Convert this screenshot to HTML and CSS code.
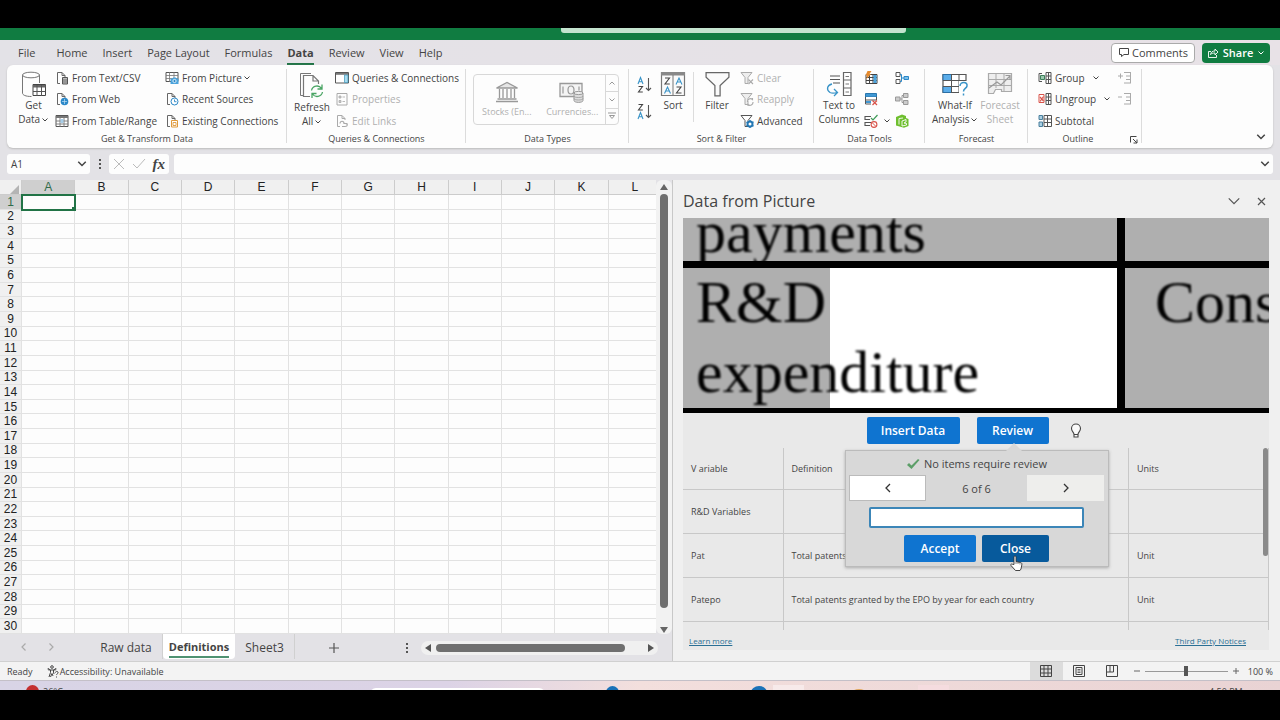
FILE: index.html
```html
<!DOCTYPE html>
<html lang="en">
<head>
<meta charset="utf-8">
<title>Data from Picture</title>
<link rel="stylesheet" href="styles.css">
<script src="grid.js" defer></script>
</head>
<body>
<svg class="sprite" aria-hidden="true">
  <symbol id="chev" viewBox="0 0 8 8"><path d="M1.500 2.500l2.500 2.500 2.500-2.500" fill="none" stroke="currentColor" stroke-width="1"/></symbol>
  <symbol id="page" viewBox="0 0 14 14"><path d="M5 12.500H2.500V1.500h4.500l3 3V6M7 1.500v3h3" fill="none" stroke="#666"/></symbol>
  <symbol id="funnel" viewBox="0 0 24 26"><path d="M1 1.500h22V6l-8.500 8v10h-5V14L1 6z" fill="#fafafa" stroke="#666" stroke-width="1.200"/></symbol>
</svg>

<div class="app">
  <header class="titlebar"><div class="search-edge"></div></header>

  <nav class="tabs">
    <button class="tab tab-file">File</button>
    <button class="tab">Home</button>
    <button class="tab">Insert</button>
    <button class="tab">Page Layout</button>
    <button class="tab">Formulas</button>
    <button class="tab active">Data</button>
    <button class="tab">Review</button>
    <button class="tab">View</button>
    <button class="tab">Help</button>
    <span class="grow"></span>
    <button class="comments"><svg width="12" height="11" viewBox="0 0 12 11"><path d="M1.500 1.500h9v6H6L3.500 9.500v-2h-2z" fill="none" stroke="#444"/></svg>Comments</button>
    <button class="share"><svg width="12" height="12" viewBox="0 0 12 12"><path d="M4 4.500H1.500v6h8V8M3.500 7.500c.5-2.500 2-3.500 4.500-3.500V2l3 3-3 3V6C6 6 4.500 6.500 3.500 7.500z" fill="none" stroke="#fff" stroke-width=".9"/></svg>Share<svg class="chev" viewBox="0 0 8 8"><use href="#chev"/></svg></button>
  </nav>

  <section class="ribbon">
    <div class="group g-get">
      <div class="body">
        <button class="big w-get">
          <svg width="26" height="27" viewBox="0 0 26 27"><path d="M1.500 4v18c0 2 3 3.500 9 3.500M18.500 12V4" fill="none" stroke="#777"/><ellipse cx="10" cy="4" rx="8.500" ry="2.800" fill="#fff" stroke="#777"/><path d="M12 13.500h12.500v11H12z" fill="#fff" stroke="#444"/><path d="M12 14h12.500v2.500H12z" fill="#666"/><path d="M12 20.500h12.500M16 14v11M20.500 14v11" stroke="#555"/></svg>
          <span>Get<br>Data <svg class="chev" viewBox="0 0 8 8"><use href="#chev"/></svg></span>
        </button>
        <div class="list l-wide">
          <button><svg class="ico" viewBox="0 0 14 14"><use href="#page"/><path d="M7.500 6.500h5v6.500h-5z" fill="#bbb" stroke="#555"/><path d="M8 9h4M8 11h4" stroke="#555" stroke-width=".7"/></svg>From Text/CSV</button>
          <button><svg class="ico" viewBox="0 0 14 14"><use href="#page"/><circle cx="9.500" cy="9.500" r="3.800" fill="#2b88c8"/><path d="M9.500 7v5M7 9.500h5" stroke="#bfe0f5" stroke-width=".7"/></svg>From Web</button>
          <button><svg class="ico" viewBox="0 0 14 14"><path d="M1 1.500h12v11H1z" fill="#fff" stroke="#555"/><path d="M1 2h12v2H1z" fill="#777"/><path d="M1 7h12M1 10h12M5 2v11M9 2v11" stroke="#777" stroke-width=".9"/><path d="M5.500 5h3v4h-3z" fill="#a7cde8"/></svg>From Table/Range</button>
        </div>
        <div class="list">
          <button><svg class="ico" viewBox="0 0 14 14"><path d="M1 1.500h12v9H1z" fill="#fff" stroke="#555"/><path d="M1 4.500h12M1 7.500h12M4.500 1v10M9 1v10" stroke="#777" stroke-width=".8"/><path d="M5.500 7.500h2l.7-1h2.600l.7 1h2v5.500h-8z" fill="#4ba3dc"/><circle cx="9.500" cy="10" r="1.600" fill="#2b88c8" stroke="#fff" stroke-width=".8"/></svg>From Picture<svg class="chev snug" viewBox="0 0 8 8"><use href="#chev"/></svg></button>
          <button><svg class="ico" viewBox="0 0 14 14"><use href="#page"/><circle cx="9.500" cy="9.500" r="3.500" fill="#fff" stroke="#2b88c8"/><path d="M9.500 7.500v2.200h2" fill="none" stroke="#2b88c8" stroke-width=".9"/></svg>Recent Sources</button>
          <button><svg class="ico" viewBox="0 0 14 14"><use href="#page"/><path d="M6.500 6.500h6v6.500h-6z" fill="#fff" stroke="#e09a3c"/><path d="M8 8.500h3v3H8z" fill="none" stroke="#e09a3c" stroke-width=".9"/></svg>Existing Connections</button>
        </div>
      </div>
      <div class="label">Get &amp; Transform Data</div>
    </div>

    <div class="group g-query">
      <div class="body">
        <button class="big w-refresh">
          <svg width="26" height="29" viewBox="0 0 26 29"><path d="M4 24.500H1.500v-22H12" fill="none" stroke="#777"/><path d="M11 25.500H4.500V4.500H14l5.500 5.500v3M14 4.500V10h5.500" fill="none" stroke="#777" stroke-width="1.200"/><path d="M12.500 19.500a5.500 5.500 0 0 1 10-2M23.500 21a5.500 5.500 0 0 1-10 2M23 13.500v4.500h-4.500M13 27v-4.500h4.500" fill="none" stroke="#4aa564" stroke-width="1.300"/></svg>
          <span>Refresh<br>All <svg class="chev" viewBox="0 0 8 8"><use href="#chev"/></svg></span>
        </button>
        <div class="list">
          <button><svg class="ico" viewBox="0 0 14 14"><path d="M.5 1.500h13v10.500H.5z" fill="#fff" stroke="#555"/><path d="M1 2h12v1.800H1z" fill="#777"/><path d="M9.500 4h3.500v7.500H9.500z" fill="#a9dcf0" stroke="#3b93b8" stroke-width=".7"/></svg>Queries &amp; Connections</button>
          <button class="off"><svg class="ico" viewBox="0 0 14 14"><path d="M2 1.500h10v11.500H2z" fill="none" stroke="#aaa"/><path d="M4 4h2v2H4zM4 8.500h2v2H4zM7.500 5H10M7.500 9.500H10" fill="#ccc" stroke="#aaa" stroke-width=".8"/></svg>Properties</button>
          <button class="off"><svg class="ico" viewBox="0 0 14 14"><path d="M5 12.500H2.500V1.500h4.500l3 3V6M7 1.500v3h3" fill="none" stroke="#aaa"/><path d="M5 9.500c0-3 4-3 4 0h3.500M7 12.500h3c3 0 3-3 .5-3" fill="none" stroke="#aaa" stroke-width="1.200"/></svg>Edit Links</button>
        </div>
      </div>
      <div class="label">Queries &amp; Connections</div>
    </div>

    <div class="group g-types">
      <div class="body">
        <div class="gallery">
          <button class="off type"><svg width="24" height="22" viewBox="0 0 24 22"><path d="M1.500 7L12 1.500 22.500 7zM1 20.500h22M2.500 18h19M4.500 8v9M8 8v9M12 8v9M16 8v9M19.500 8v9" fill="#e6e6e6" stroke="#999" stroke-width="1.300"/></svg>Stocks (En...</button>
          <button class="off type"><svg width="26" height="22" viewBox="0 0 26 22"><path d="M1 2.500h22v13H1z" fill="#f4f4f4" stroke="#999" stroke-width="1.300"/><path d="M4 5.500v7M20 5.500v4M12 5c-4 0-4 8 0 8 4 0 4-8 0-8z" fill="none" stroke="#999" stroke-width="1.200"/><path d="M15 12v7.500c0 2.500 9 2.500 9 0V12z" fill="#ddd" stroke="#999"/><ellipse cx="19.500" cy="12" rx="4.500" ry="1.600" fill="#eee" stroke="#999"/><path d="M15 15c0 2 9 2 9 0M15 17.500c0 2 9 2 9 0" fill="none" stroke="#999" stroke-width=".8"/></svg>Currencies...</button>
          <div class="spin">
            <button aria-label="Previous row"><svg class="chev flip" viewBox="0 0 8 8"><use href="#chev"/></svg></button>
            <button aria-label="Next row"><svg class="chev" viewBox="0 0 8 8"><use href="#chev"/></svg></button>
            <button aria-label="More data types"><svg class="chev" viewBox="0 0 8 8"><path d="M0 1h8M1.500 3.500h5L4 6.500z" fill="none" stroke="currentColor"/></svg></button>
          </div>
        </div>
      </div>
      <div class="label">Data Types</div>
    </div>

    <div class="group g-sort">
      <div class="body">
        <div class="az">
          <button aria-label="Sort A to Z"><svg width="16" height="18" viewBox="0 0 16 18"><path d="M1 8l2.500-6.500L6 8M1.800 5.800h3.400" fill="none" stroke="#3a94c8" stroke-width="1.100"/><path d="M1.500 10.500h4l-4 5.500h4.300" fill="none" stroke="#444" stroke-width="1.100"/><path d="M11.500 2v12.500M9 12l2.500 2.500L14 12" fill="none" stroke="#555" stroke-width="1.100"/></svg></button>
          <button aria-label="Sort Z to A"><svg width="16" height="18" viewBox="0 0 16 18"><path d="M1.500 1.500h4l-4 5.500h4.300" fill="none" stroke="#444" stroke-width="1.100"/><path d="M1 16l2.500-6.500L6 16M1.800 13.800h3.400" fill="none" stroke="#3a94c8" stroke-width="1.100"/><path d="M11.500 2v12.500M9 12l2.500 2.500L14 12" fill="none" stroke="#555" stroke-width="1.100"/></svg></button>
        </div>
        <button class="big w-sort">
          <svg width="26" height="27" viewBox="0 0 26 27"><path d="M1.500 1.500h23v23h-23z" fill="#fafafa" stroke="#777" stroke-width="1.200"/><path d="M1 1h24v3.500H1z" fill="#888"/><path d="M13 4v20" stroke="#777"/><path d="M5 7h4.500L5 13h4.800M16.500 16H21l-4.500 6h5" fill="none" stroke="#444" stroke-width="1.100"/><path d="M4.500 22.500L7.500 16l3 6.500M5.500 20h4M16 13.500L19 7l3 6.500M17 11h4" fill="none" stroke="#3a94c8" stroke-width="1.100"/></svg>
          <span>Sort</span>
        </button>
        <div class="rule"></div>
        <button class="big w-filter">
          <svg width="25" height="27" viewBox="0 0 24 26"><use href="#funnel"/></svg>
          <span>Filter</span>
        </button>
        <div class="list">
          <button class="off"><svg class="ico" viewBox="0 0 14 14"><path d="M1 1.500h11l-4 5v6H5v-6z" fill="#eee" stroke="#aaa"/><path d="M8.500 8.500l4.500 4.500M13 8.500L8.500 13" stroke="#aaa" stroke-width="1.100"/></svg>Clear</button>
          <button class="off"><svg class="ico" viewBox="0 0 14 14"><path d="M1 1.500h11l-4 5v6H5v-6z" fill="#eee" stroke="#aaa"/><path d="M7.500 10a3 3 0 0 1 5-2.500V6M13 10a3 3 0 0 1-5 2.500V14" fill="#fff" stroke="#aaa" stroke-width="1.100"/></svg>Reapply</button>
          <button><svg class="ico" viewBox="0 0 14 14"><path d="M1 1.500h11l-4 5v6H5v-6z" fill="#fff" stroke="#555"/><circle cx="10" cy="10" r="2.500" fill="#fff" stroke="#2478b4" stroke-width="2"/><path d="M10 6v1.500M10 12.500V14M6.500 8l1 .8M12.500 11.500l1 .7M6.500 12l1-.8M12.500 8.500l1-.7" stroke="#2478b4" stroke-width="1.400"/></svg>Advanced</button>
        </div>
      </div>
      <div class="label">Sort &amp; Filter</div>
    </div>

    <div class="group g-tools">
      <div class="body">
        <button class="big w-ttc">
          <svg width="28" height="27" viewBox="0 0 28 27"><path d="M5 5h10M5 8.500h10M8 12h7" stroke="#555" stroke-width="1.200"/><path d="M7 13c-5 1-6 6-2 8.500 2 1 4 1 7 0M9 18l3.500 3.500L9 25" fill="none" stroke="#3a94c8" stroke-width="1.300"/><path d="M18.500 1.500h7.500v23h-7.500zM18.500 9h7.500M18.500 17h7.500" fill="#fff" stroke="#666" stroke-width="1.200"/><path d="M20.500 5.500h3.500M20.500 13h3.500M20.500 21h3.500" stroke="#777"/></svg>
          <span>Text to<br>Columns</span>
        </button>
        <div class="list icons">
          <button aria-label="Flash Fill"><svg class="ico" viewBox="0 0 14 14"><path d="M2 3.500h11v9H2z" fill="#fff" stroke="#444"/><path d="M2 6.500h11M2 9.500h11M5.500 3v10M9 3v10" stroke="#444"/><path d="M9.500 4h3v8h-3z" fill="#4ba3dc"/><path d="M3.500 0h4L5.500 3H7L2 8.500l1.200-4H1.500z" fill="#e58a2e"/></svg></button>
          <button aria-label="Remove Duplicates"><svg class="ico" viewBox="0 0 14 14"><path d="M1.500 1.500h11V5h-11z" fill="#3f97d3" stroke="#2a77ae"/><path d="M1.500 5v3h11V5M1.500 8v4H7" fill="#fff" stroke="#555"/><path d="M2 9h5v2H2z" fill="#3f97d3"/><path d="M8.500 8.500L13 13M13 8.500L8.500 13" stroke="#d9534a" stroke-width="1.200"/></svg></button>
          <button aria-label="Data Validation"><svg class="ico" viewBox="0 0 14 14"><path d="M7 2.500H1v3h5M7 8.500H1v3h5" fill="none" stroke="#555" stroke-width="1.100"/><path d="M7 4l2 2 4.500-5" fill="none" stroke="#3f9b58" stroke-width="1.200"/><circle cx="10" cy="10.500" r="2.900" fill="#fff" stroke="#d9534a" stroke-width="1.100"/><path d="M8 8.500l4 4" stroke="#d9534a"/></svg><svg class="chev" viewBox="0 0 8 8"><use href="#chev"/></svg></button>
        </div>
        <div class="list icons">
          <button aria-label="Consolidate"><svg class="ico" viewBox="0 0 14 14"><path d="M1 1.500h4v4H1zM1 8.500h4v4H1z" fill="#fff" stroke="#555"/><path d="M5 3.500h1.500v7H5M6.500 7H9" fill="none" stroke="#2b88c8"/><path d="M9 5.500h4.500v3H9z" fill="#7fc0ea" stroke="#2b88c8"/></svg></button>
          <button class="off" aria-label="Relationships"><svg class="ico" viewBox="0 0 14 14"><path d="M.5 5h4.500v4H.5zM8.500 1.500H13v4H8.500zM8.500 8.500H13v4H8.500z" fill="#ccc" stroke="#999"/><path d="M5 7h2M8.500 3.500H7v7h1.500" fill="none" stroke="#999"/></svg></button>
          <button aria-label="Manage Data Model"><svg class="ico" viewBox="0 0 14 14"><path d="M1 3l6-2.500L11 2v2l2.500 1v7L9 13.800 1 11.500z" fill="#6fbf2f"/><path d="M4 10.500V4.500L8 4M7 12V7l4-1.500V8L9 9l2.500.5V11z" fill="none" stroke="#fff" stroke-width=".9"/></svg></button>
        </div>
      </div>
      <div class="label">Data Tools</div>
    </div>

    <div class="group g-fore">
      <div class="body">
        <button class="big w-whatif">
          <svg width="28" height="27" viewBox="0 0 28 27"><path d="M2 3.500h23v18H2z" fill="#fff" stroke="#555" stroke-width="1.200"/><path d="M2 3.500h8.500v6H2zM2 15.500h8.500v6H2z" fill="#5badea" stroke="#2a6fa5"/><path d="M2 9.500h23M2 15.500h23M10.500 3v19M18 3v19" stroke="#555"/><path d="M18 10h8v14h-8z" fill="#fff"/><path d="M19 15c0-5 8-4.500 7 0-.5 2.500-3.500 2.500-3.500 5.500M22.500 22.500v2" fill="none" stroke="#3a94c8" stroke-width="1.500"/></svg>
          <span>What-If<br>Analysis <svg class="chev" viewBox="0 0 8 8"><use href="#chev"/></svg></span>
        </button>
        <button class="big w-fsheet off">
          <svg width="26" height="27" viewBox="0 0 26 27"><path d="M1.500 2.500h23v18h-10v-2h-6l-2 4h-5z" fill="#eee" stroke="#aaa" stroke-width="1.200"/><path d="M2 8.500h22M2 14.500h22M9 3v14M17 3v17" stroke="#aaa"/><path d="M2 17l8-6 4 3 9-9M18.500 4.500H23V9" fill="none" stroke="#999" stroke-width="1.200"/></svg>
          <span>Forecast<br>Sheet</span>
        </button>
      </div>
      <div class="label">Forecast</div>
    </div>

    <div class="group g-out">
      <div class="body">
        <div class="list">
          <button><svg class="ico" viewBox="0 0 14 14"><path d="M4 2.500H1v8h3" fill="none" stroke="#555"/><path d="M2.500 4.500h4v4h-4z" fill="#9ccbb0" stroke="#3d7f5b"/><path d="M8 1.500h5v11H8zM8 5h5M8 8.500h5M10.500 1.500v11" fill="#fff" stroke="#555"/></svg>Group<svg class="chev far" viewBox="0 0 8 8"><use href="#chev"/></svg></button>
          <button><svg class="ico" viewBox="0 0 14 14"><path d="M1 2.500h5v8H1z" fill="#fff" stroke="#d9534a"/><path d="M2 9.500l3.500-5M2 5l3.500 4" stroke="#d9534a" stroke-width="1.200"/><path d="M8 1.500h5v11H8zM8 5h5M8 8.500h5M10.500 1.500v11" fill="#fff" stroke="#555"/></svg>Ungroup<svg class="chev far" viewBox="0 0 8 8"><use href="#chev"/></svg></button>
          <button><svg class="ico" viewBox="0 0 14 14"><path d="M1 1.500h3.500v4H1zM1 8h3.500v4.500H1z" fill="#a9cfe2" stroke="#4a7f9c"/><path d="M6 1.500h7.500v11H6zM6 5h7.500M6 8.500h7.500M9.500 1.500v11" fill="#fff" stroke="#555"/></svg>Subtotal</button>
        </div>
        <div class="list icons end">
          <button class="off" aria-label="Show Detail"><svg class="ico" viewBox="0 0 14 14"><path d="M0 5h5M2.500 2.500v5M6 1.500h7M8 5h5M8 8.500h5M6 12h7M12.500 1.500V12" fill="none" stroke="#aaa"/></svg></button>
          <button class="off" aria-label="Hide Detail"><svg class="ico" viewBox="0 0 14 14"><path d="M0 5h4M6 1.500h7M8 5h5M8 8.500h5M6 12h7M12.500 1.500V12" fill="none" stroke="#aaa"/></svg></button>
        </div>
      </div>
      <div class="label out">Outline</div>
      <button class="launcher" aria-label="Outline settings"><svg width="8" height="8" viewBox="0 0 8 8"><path d="M.5 6.500v-6h6M3 3l4 4M7 3.500V7H3.500" fill="none" stroke="#444"/></svg></button>
    </div>
    <button class="collapse" aria-label="Collapse ribbon"><svg width="12" height="12" viewBox="0 0 8 8"><use href="#chev"/></svg></button>
  </section>

  <div class="formula">
    <button class="namebox">A1<svg width="12" height="12" viewBox="0 0 8 8"><use href="#chev"/></svg></button>
    <svg width="4" height="12" viewBox="0 0 4 12"><path d="M1 1h2v2H1zM1 5h2v2H1zM1 9h2v2H1z" fill="#555"/></svg>
    <div class="fx">
      <svg width="12" height="12" viewBox="0 0 12 12"><path d="M1 1l10 10M11 1L1 11" stroke="#bbb" fill="none"/></svg>
      <svg width="14" height="12" viewBox="0 0 14 12"><path d="M1 6l4 4 8-9" stroke="#bbb" fill="none"/></svg>
      <span class="fn">fx</span>
    </div>
    <div class="bar"><input type="text" aria-label="Formula"><svg width="12" height="12" viewBox="0 0 8 8"><use href="#chev"/></svg></div>
  </div>

  <main class="work">
    <section class="sheet">
      <div class="gridarea">
        <div class="clip"><table class="cells" id="cells"></table></div>
        <div class="vbar">
          <svg width="10" height="8" viewBox="0 0 10 8"><path d="M5 1l4 6H1z" fill="#666"/></svg>
          <div class="vthumb"></div>
          <svg width="10" height="8" viewBox="0 0 10 8"><path d="M1 1h8L5 7z" fill="#666"/></svg>
        </div>
      </div>
      <div class="sheettabs">
        <div class="arrows">
          <button aria-label="Previous sheet"><svg width="8" height="10" viewBox="0 0 8 10"><path d="M5.500 1.500L2 5l3.500 3.500" fill="none" stroke="#aaa" stroke-width="1.200"/></svg></button>
          <button aria-label="Next sheet"><svg width="8" height="10" viewBox="0 0 8 10"><path d="M2.500 1.500L6 5 2.500 8.500" fill="none" stroke="#aaa" stroke-width="1.200"/></svg></button>
        </div>
        <button class="st first">Raw data</button>
        <button class="st on"><span>Definitions</span></button>
        <button class="st third">Sheet3</button>
        <button class="add" aria-label="New sheet"><svg width="10" height="10" viewBox="0 0 10 10"><path d="M5 0v10M0 5h10" stroke="#555" stroke-width="1.200"/></svg></button>
        <span class="grow"></span>
        <svg width="4" height="12" viewBox="0 0 4 12"><path d="M1 1h2v2H1zM1 5h2v2H1zM1 9h2v2H1z" fill="#555"/></svg>
        <div class="hbar">
          <svg width="7" height="8" viewBox="0 0 7 8"><path d="M6 0v8L0 4z" fill="#555"/></svg>
          <div class="hthumb"></div>
          <svg width="7" height="8" viewBox="0 0 7 8"><path d="M1 0v8l6-4z" fill="#555"/></svg>
        </div>
      </div>
    </section>

    <aside class="pane">
      <div class="panehead">
        <h1>Data from Picture</h1>
        <button aria-label="Pane options"><svg width="14" height="14" viewBox="0 0 8 8"><path d="M1 2.500l3 3 3-3" fill="none" stroke="#555" stroke-width=".7"/></svg></button>
        <button aria-label="Close pane"><svg width="9" height="9" viewBox="0 0 9 9"><path d="M1 1l7 7M8 1L1 8" stroke="#555" stroke-width="1.200"/></svg></button>
      </div>
      <div class="panebody">
        <div class="picture">
          <div class="pc up"><p>payments</p></div>
          <div class="pc"></div>
          <div class="pc lit"><p>R&amp;D<br>expenditure</p></div>
          <div class="pc cons"><p>Cons</p></div>
        </div>
        <div class="actions">
          <button class="primary wide">Insert Data</button>
          <button class="primary">Review</button>
          <button class="bulb" aria-label="Tips"><svg width="12" height="16" viewBox="0 0 12 16"><path d="M4 11.500c0-2.500-2.500-3-2.500-6a4.500 4.500 0 0 1 9 0c0 3-2.500 3.500-2.500 6zM4 11.500V14h4v-2.500" fill="#fafafa" stroke="#444" stroke-width="1.100"/></svg></button>
          <div class="pop">
            <svg class="caret" width="16" height="8" viewBox="0 0 16 8"><path d="M0 8l8-8 8 8z" fill="#d8d8d8"/></svg>
            <div class="msg"><svg width="14" height="12" viewBox="0 0 14 12"><path d="M1 7l2-2 2.500 2.500L12 1l1.500 1L5.500 11z" fill="#5c9e68"/></svg>No items require review</div>
            <div class="nav">
              <button class="prev" aria-label="Previous item"><svg width="8" height="10" viewBox="0 0 8 10"><path d="M6 1L2 5l4 4" fill="none" stroke="#333" stroke-width="1.300"/></svg></button>
              <span>6 of 6</span>
              <button class="next" aria-label="Next item"><svg width="8" height="10" viewBox="0 0 8 10"><path d="M2 1l4 4-4 4" fill="none" stroke="#333" stroke-width="1.300"/></svg></button>
            </div>
            <input class="edit" type="text" aria-label="Cell value">
            <div class="pair">
              <button class="primary accept">Accept</button>
              <button class="primary close">Close<svg class="cursor" width="13" height="16" viewBox="0 0 13 16"><path d="M4 9.500V2c0-1.500 2-1.500 2 0v4.500l4.500 1c1.300.3 1.500 1.200 1.300 2.500L11 14l-1 1.500H5.500L1 10.500c-.8-1 .5-2 1.500-1.200z" fill="#fff" stroke="#333" stroke-width=".9"/><path d="M6 6.500V9M8 7v2M10 7.500V9.500" stroke="#333" stroke-width=".6"/></svg></button>
            </div>
          </div>
        </div>
        <div class="tablewrap">
          <table class="data">
            <tr><td class="c1">V ariable</td><td>Definition</td><td class="c3">Units</td></tr>
            <tr><td>R&amp;D Variables</td><td></td><td></td></tr>
            <tr><td>Pat</td><td>Total patents</td><td>Unit</td></tr>
            <tr><td>Patepo</td><td>Total patents granted by the EPO by year for each country</td><td>Unit</td></tr>
            <tr><td></td><td></td><td></td></tr>
          </table>
          <div class="tthumb"></div>
        </div>
        <div class="links"><a href="#">Learn more</a><a href="#">Third Party Notices</a></div>
      </div>
    </aside>
  </main>

  <footer class="status">
    <span>Ready</span>
    <svg class="acc" width="12" height="13" viewBox="0 0 12 13"><circle cx="5" cy="2" r="1.300" fill="none" stroke="#444"/><path d="M1 3.500l2.500 1.500v2.500L2 12M9 3.500L6.500 5v2L7 9M1 3.500C.5 5 2 5 3.500 5h3C8 5 9.500 5 9 3.500M3.500 12L5 8.500 6 11" fill="none" stroke="#444"/><path d="M8.500 7.500c0-1.500 3-1.500 2.500.5-.3 1-1.500 1-1.500 2M9.500 11.500v1" fill="none" stroke="#444"/></svg>
    <span>Accessibility: Unavailable</span>
    <span class="grow"></span>
    <button class="view sel" aria-label="Normal view"><svg width="12" height="12" viewBox="0 0 12 12"><path d="M.5.5h11v11H.5zM.5 4h11M.5 8h11M4 .5v11M8 .5v11" fill="none" stroke="#444"/></svg></button>
    <button class="view" aria-label="Page layout view"><svg width="12" height="12" viewBox="0 0 12 12"><path d="M.5.500h11v11H.5zM3 2.500h6v7H3z" fill="none" stroke="#444"/><path d="M4.500 4.500h3M4.500 6h3M4.500 7.500h3" stroke="#444" stroke-width=".8"/></svg></button>
    <button class="view" aria-label="Page break view"><svg width="12" height="12" viewBox="0 0 12 12"><path d="M.5.500h11v11H.5zM.5 7h7V.5M4 .5V7" fill="none" stroke="#444"/></svg></button>
    <svg width="8" height="8" viewBox="0 0 8 8"><path d="M1 4h6" stroke="#666"/></svg>
    <input class="zoom" type="range" min="0" max="100" value="50" aria-label="Zoom">
    <svg width="8" height="8" viewBox="0 0 8 8"><path d="M1 4h6M4 1v6" stroke="#666"/></svg>
    <span class="pct">100 %</span>
  </footer>
  <div class="taskbar">
    <span class="alert"></span><span class="temp">26°C</span>
    <span class="tsearch"></span>
    <span class="dot d1"></span><span class="dot d2"></span><span class="tile"></span>
    <span class="dot gold"></span><span class="tile t2"></span>
    <span class="clock">4:50 PM</span>
  </div>
</div>
</body>
</html>
```

FILE: grid.js
```js
const table = document.getElementById('cells');
const letters = 'ABCDEFGHIJKL'.split('');
const corner = '<th class="corner"><svg width="9" height="9" viewBox="0 0 9 9"><path d="M9 0v9H0z" fill="#b4b4b4"/></svg></th>';
const head = '<thead><tr>' + corner + letters.map((c, i) => `<th class="${i ? '' : 'hot'}">${c}</th>`).join('') + '</tr></thead>';
let rows = '';
for (let r = 1; r <= 30; r++) {
  rows += `<tr><th class="${r === 1 ? 'hot' : ''}">${r}</th>` +
    letters.map((c, i) => r === 1 && i === 0 ? '<td class="picked"><i></i></td>' : '<td></td>').join('') + '</tr>';
}
table.innerHTML = head + '<tbody>' + rows + '</tbody>';
```

FILE: styles.css
```css
* { box-sizing: border-box; }
body {
  margin: 0; height: 100vh; padding: 28px 0 30px; background: #000; overflow: hidden;
  font-family: "Open Sans", "Noto Sans", sans-serif; font-size: 10px; color: #444;
}
button { font: inherit; color: inherit; background: none; border: 0; padding: 0; margin: 0; white-space: nowrap; }
svg { flex: none; }
.sprite { position: absolute; width: 0; height: 0; }
.grow { flex: 1; }
.chev { width: 8px; height: 8px; }
.flip { transform: rotate(180deg); }
.app { height: 100%; display: flex; flex-direction: column; background: #e3e2e6; overflow: hidden; }

.titlebar { height: 12px; flex: none; background: #107c41; display: flex; justify-content: center; padding-left: 187px; }
.search-edge { width: 345px; height: 5px; background: #c4e4cf; border-radius: 0 0 3px 3px; }

.tabs { height: 25px; flex: none; display: flex; align-items: center; gap: 15px; padding: 0 10px 0 18px; font-size: 11px; background: linear-gradient(90deg, #e3e2e7, #e8e2e7); }
.tab { height: 22px; margin-top: 3px; line-height: 20px; border-bottom: 2px solid transparent; }
.tab-file { margin-right: 6px; }
.tab.active { font-weight: 700; border-color: #217346; }
.comments, .share { height: 20px; display: flex; align-items: center; justify-content: center; gap: 2px; border-radius: 4px; font-size: 11px; }
.comments { background: #fff; border: 1px solid #aaa; width: 84px; margin-right: -8px; }
.share { background: #107c41; color: #fff; font-weight: 600; width: 68px; gap: 4px; }

.ribbon { height: 83px; flex: none; margin: 0 7px; background: #fdfdfd; border-radius: 6px; display: flex; padding: 2px 0 0; box-shadow: 0 1px 2px #bbb; position: relative; }
.group { display: flex; flex-direction: column; position: relative; flex: none; }
.group::after { content: ""; position: absolute; right: 0; top: 2px; bottom: 5px; width: 1px; background: #dcdcdc; }
.g-get { width: 280px; } .g-query { width: 179px; } .g-types { width: 163px; } .g-sort { width: 185px; }
.g-tools { width: 111px; } .g-fore { width: 103px; } .g-out { width: 114px; }
.body { flex: 1; display: flex; }
.label { height: 16px; line-height: 14px; text-align: center; font-size: 9px; }
.label.out { padding-right: 14px; }
.big { display: flex; flex-direction: column; align-items: center; padding-top: 4px; line-height: 14px; }
.big .chev { vertical-align: middle; margin-left: -2px; }
.w-get { width: 48px; padding-left: 5px; } .w-refresh { width: 48px; padding-left: 2px; } .w-sort { width: 40px; } .w-filter { width: 46px; }
.w-ttc { width: 56px; } .w-whatif { width: 54px; padding-left: 6px; } .w-fsheet { width: 42px; }
.list { display: grid; grid-template-rows: 21px 22px 21px; justify-items: start; height: 64px; }
.l-wide { width: 110px; }
.list button { display: flex; align-items: center; gap: 3px; }
.list .snug { margin-left: -2px; }
.ico { width: 14px; height: 14px; }
.icons { width: 34px; }
.icons .chev { margin-left: 2px; }
.g-out .list { padding-left: 10px; }
.g-out .list:first-child { width: 90px; }
.g-out .list.end { padding-left: 0; width: 16px; }
.list .far { margin-left: 4px; }
.off { color: #b0b0b0; }
.rule { width: 1px; margin: 5px 0 10px; background: #dcdcdc; }
.az { display: flex; flex-direction: column; gap: 9px; padding: 9px 0 0 8px; width: 24px; }
.az button { height: 18px; }
.gallery { display: flex; flex: 1; margin: 7px 10px 7px 7px; border: 1px solid #d8d8d8; border-radius: 4px; }
.type { display: flex; flex-direction: column; align-items: center; justify-content: center; gap: 2px; flex: 1; line-height: 14px; font-size: 9px; }
.spin { width: 13px; display: grid; grid-template-rows: repeat(3, 1fr); border-left: 1px solid #d8d8d8; color: #999; }
.spin button { line-height: 0; }
.spin button + button { border-top: 1px solid #d8d8d8; }
.launcher { position: absolute; right: 2px; bottom: 2px; line-height: 0; padding: 2px; }
.collapse { margin: auto 6px 5px auto; line-height: 0; }

.formula { height: 32px; flex: none; display: flex; align-items: center; padding: 0 7px; gap: 8px; }
.namebox, .fx, .bar { height: 20px; background: #fdfdfd; border-radius: 3px; display: flex; align-items: center; }
.namebox { width: 83px; justify-content: space-between; padding: 0 2px 0 4px; }
.fx { width: 60px; justify-content: space-between; padding: 0 4px; margin: 0 -3px 0 -1px; }
.fn { font: italic 700 15px/16px "Liberation Serif", serif; }
.bar { flex: 1; padding: 0 2px; }
.bar input { flex: 1; border: 0; background: none; outline: 0; height: 18px; }

.work { flex: 1; min-height: 0; display: flex; border-bottom: 1px solid #d0d0d0; }
.sheet { width: 673px; flex: none; display: flex; flex-direction: column; border-right: 1px solid #c8c8c8; }
.gridarea { flex: 1; min-height: 0; display: flex; }
.clip { flex: 1; overflow: hidden; }
.cells { width: 662px; height: 100%; table-layout: fixed; border-collapse: separate; border-spacing: 0; background: #fdfdfd; font: 12px/12px "Liberation Sans", Arial, sans-serif; }
.cells th, .cells td { padding: 0; border-right: 1px solid #e2e2e2; border-bottom: 1px solid #e2e2e2; }
.cells th { font-weight: 400; background: #f0f0f0; color: #222; }
.cells thead th { height: 15px; border-color: #ccc; }
.cells th:first-child { width: 22px; }
.cells .hot { background: #cfcfcf; color: #2f6b4a; }
.cells .corner { text-align: right; vertical-align: bottom; line-height: 0; padding-right: 2px; }
.picked { outline: 2px solid #217346; outline-offset: -1px; position: relative; }
.picked i { position: absolute; right: -2px; bottom: -2px; width: 4px; height: 4px; background: #217346; }
.vbar { width: 16px; display: flex; flex-direction: column; align-items: center; background: #f2f2f2; padding: 3px 0 0; gap: 3px; border-radius: 6px; }
.vthumb { width: 8px; flex: 1; background: #6f6f6f; border-radius: 4px; margin-bottom: 15px; }
.sheettabs { height: 27px; flex: none; display: flex; align-items: center; font-size: 12px; padding-right: 14px; }
.arrows { display: flex; gap: 19px; padding-left: 20px; width: 90px; }
.st { height: 25px; line-height: 28px; align-self: flex-start; }
.first { width: 73px; border-right: 1px solid #d0d0d0; }
.st.on { width: 72px; background: #fff; border-radius: 0 0 4px 4px; font-weight: 700; font-size: 11px; line-height: 21px; }
.on span { display: inline-block; border-bottom: 2px solid #4f9272; height: 23px; line-height: 24px; }
.third { width: 60px; border-right: 1px solid #d0d0d0; }
.add { margin-left: 34px; line-height: 0; }
.hbar { width: 237px; height: 14px; margin-left: 12px; background: #f0f0f0; border-radius: 7px; display: flex; align-items: center; justify-content: space-between; padding: 0 4px; }
.hthumb { flex: 1; height: 8px; border-radius: 4px; background: #6f6f6f; margin: 0 22px 0 4px; }

.pane { flex: 1; min-width: 0; background: #f0f0f0; padding: 0 11px 11px 10px; display: flex; flex-direction: column; }
.panehead { height: 38px; flex: none; display: flex; align-items: center; gap: 16px; padding: 4px 3px 0 0; }
.panehead h1 { margin: 0; flex: 1; font-size: 16px; font-weight: 400; }
.panehead button { line-height: 0; }
.panebody { flex: 1; min-height: 0; background: #e9e9e9; display: flex; flex-direction: column; }
.picture { display: grid; grid-template-columns: 434px 1fr; grid-template-rows: 43px 140px; gap: 7px 8px; padding-bottom: 5px; background: #000; overflow: hidden; color: #000; font: 60px/70px "Liberation Serif", serif; }
.pc { background: #afafaf; padding-left: 13px; overflow: hidden; display: flex; align-items: flex-start; white-space: nowrap; }
.pc p { margin: -1px 0 0; filter: blur(1px); }
.pc.up { align-items: flex-end; }
.up p { margin-bottom: -6px; }
.lit { background: linear-gradient(90deg, #afafaf 147px, #fff 147px); }
.pc.cons { padding-left: 30px; }
.actions { height: 35px; flex: none; display: flex; justify-content: center; align-items: center; gap: 17px; position: relative; }
.primary { height: 27px; width: 72px; background: #0f74d0; color: #fff; font-weight: 600; font-size: 12px; border-radius: 2px; }
.primary.wide { width: 93px; }
.bulb { width: 20px; line-height: 0; }
.pop { position: absolute; z-index: 2; left: 50%; top: 37px; width: 264px; margin-left: -131px; background: #d8d8d8; border: 1px solid #bbb; box-shadow: 0 1px 3px #aaa; padding: 1px 4px 4px 3px; display: flex; flex-direction: column; align-items: center; font-size: 11px; }
.caret { position: absolute; top: -8px; left: 160px; }
.msg { height: 23px; display: flex; align-items: center; gap: 4px; }
.nav { align-self: stretch; display: flex; justify-content: space-between; align-items: center; }
.nav button { width: 77px; height: 26px; line-height: 0; }
.prev { background: #fff; border: 1px solid #bbb; }
.next { background: #eeeeec; }
.edit { width: 215px; height: 21px; margin-top: 6px; background: #fff; border: 2px solid #3c86b8; border-radius: 2px; outline: 0; }
.pair { display: flex; gap: 6px; margin-top: 7px; }
.primary.close { background: #075a9c; width: 67px; position: relative; }
.cursor { position: absolute; left: 28px; top: 20px; }
.tablewrap { height: 182px; flex: none; overflow: hidden; position: relative; }
.data { width: 100%; table-layout: fixed; border-collapse: collapse; font-size: 9px; }
.data td { height: 44px; padding: 0 8px; border-bottom: 1px solid #c8c8c8; border-right: 1px solid #c8c8c8; white-space: nowrap; }
.data tr:first-child td { height: 41px; }
.c1 { width: 100px; } .c3 { width: 140px; }
.tthumb { position: absolute; right: 1px; top: 0; width: 5px; height: 108px; border-radius: 3px; background: #8a8a8a; }
.links { flex: 1; display: flex; justify-content: space-between; align-items: center; padding: 0 23px 0 6px; font-size: 8px; }
.links a { color: #2b6f94; }

.status { height: 18px; flex: none; display: flex; align-items: center; background: #f3f3f3; padding: 0 7px; font-size: 9px; }
.acc { margin: 0 1px 0 14px; }
.view { width: 33px; height: 18px; line-height: 0; }
.view.sel { background: #dcdcdc; }
.status .view + svg { margin-left: 4px; }
.zoom { appearance: none; width: 83px; height: 12px; margin: 0 4px; background: linear-gradient(#999, #999) center / 100% 1px no-repeat; }
.zoom::-webkit-slider-thumb { appearance: none; width: 4px; height: 10px; background: #555; }
.pct { margin-left: 8px; }

.taskbar { height: 10px; flex: none; overflow: hidden; border-top: 1px solid #c4c0c8; background: linear-gradient(90deg, #d8d4e6, #dcd3e6 35%, #f3dfdd 50%, #e9d3d4); position: relative; }
.taskbar span { position: absolute; }
.alert { left: 26px; top: 4px; width: 13px; height: 13px; border-radius: 50%; background: #c43030; }
.temp { left: 43px; top: 5px; font-size: 9px; line-height: 12px; }
.tsearch { left: 370px; top: 7px; width: 175px; height: 12px; border-radius: 6px; background: #fff; }
.dot { left: 606px; top: 5px; width: 13px; height: 13px; border-radius: 50%; background: #1a72b8; }
.d2 { left: 751px; width: 16px; }
.gold { left: 850px; top: 8px; width: 18px; background: #e0a458; }
.tile { left: 773px; top: 4px; width: 31px; height: 12px; background: #f7eaea; }
.t2 { left: 918px; background: #f5dcdf; }
.clock { left: 1209px; top: 5px; font-size: 9px; line-height: 12px; }
```
